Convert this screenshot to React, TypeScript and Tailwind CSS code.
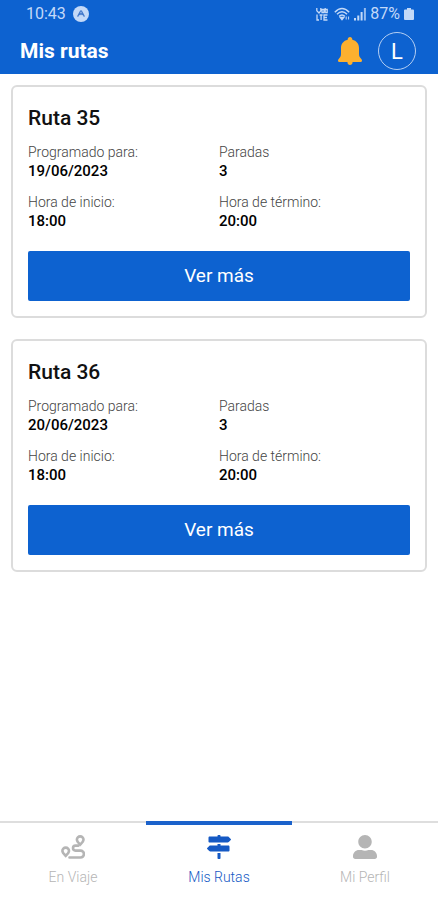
import { FaMapSigns, FaUserAlt } from 'react-icons/fa';

interface Route {
  id: number;
  name: string;
  date: string;
  stops: number;
  start: string;
  end: string;
}

const routes: Route[] = [
  { id: 35, name: 'Ruta 35', date: '19/06/2023', stops: 3, start: '18:00', end: '20:00' },
  { id: 36, name: 'Ruta 36', date: '20/06/2023', stops: 3, start: '18:00', end: '20:00' },
];

function BellIcon({ className }: { className?: string }) {
  return (
    <svg className={className} viewBox="0 0 24 28" fill="currentColor">
      <path d="M12 0c1.400 0 2.300 1 2.300 2.300v.4C18.500 3.600 21 6.800 21 11v6c0 2 .8 3.500 2.300 5 .5.500.7.900.7 1.500 0 .9-.5 1.500-1.300 1.500H1.300C.5 25 0 24.400 0 23.500c0-.6.2-1 .7-1.500C2.200 20.500 3 19 3 17v-6c0-4.200 2.500-7.400 6.700-8.300v-.4C9.700 1 10.600 0 12 0z" />
      <path d="M9.500 24.500h5v1c0 1.400-1 2.500-2.500 2.500s-2.500-1.100-2.500-2.500z" />
    </svg>
  );
}

function RouteIcon({ className }: { className?: string }) {
  return (
    <svg className={className} viewBox="0 0 24 24" fill="none" stroke="currentColor">
      <path
        d="M19.200 1.400a3.300 3.300 0 0 1 3.300 3.400c0 1.600-1.500 3-3.300 4.800-1.800-1.800-3.300-3.200-3.300-4.800a3.300 3.300 0 0 1 3.300-3.400z"
        strokeWidth="2.600"
      />
      <path
        d="M4.700 12.600A3.300 3.300 0 0 1 8 16c0 1.600-1.500 3-3.300 4.800C2.900 19 1.400 17.600 1.400 16a3.300 3.300 0 0 1 3.300-3.400z"
        strokeWidth="2.600"
      />
      <path
        d="M17.500 10.600H14.500a2.500 2.500 0 0 0 0 5h5a3.300 3.300 0 0 1 0 6.900H8.500"
        strokeWidth="2.600"
        strokeLinecap="round"
      />
    </svg>
  );
}

const tabs = [
  { id: 'trip', label: 'En Viaje', icon: RouteIcon },
  { id: 'routes', label: 'Mis Rutas', icon: FaMapSigns },
  { id: 'profile', label: 'Mi Perfil', icon: FaUserAlt },
];

function StatusBar() {
  return (
    <div className="flex h-7 items-center justify-between pl-[26px] pr-6 text-[#c3d9f8]">
      <div className="flex items-center gap-[7px]">
        <span className="text-base">10:43</span>
        <svg className="h-4 w-4" viewBox="0 0 16 16">
          <circle cx="8" cy="8" r="8" fill="currentColor" />
          <path d="M4.600 10.600 7.400 5.200q.6-.9 1.200 0l2.800 5.400M6.500 9 8 7.400 9.500 9" fill="none" stroke="#3f76c9" strokeWidth="1.200" />
        </svg>
      </div>
      <div className="flex items-center gap-1">
        <svg className="mr-0.5 h-3.5 w-3" viewBox="0 0 12 14" fill="none" stroke="currentColor" strokeWidth="1.300">
          <path d="M.8 1v2.800L3 6l1.800-2.200V1M6 2.500h2v3H6zM9.200 5.800V1M9.200 2.500h2v3h-2M1 7.500V13h2M3.600 8h3M5.100 8v5M11.500 8H8v5h3.500M8 10.500h3" />
        </svg>
        <svg className="h-3.5 w-4" viewBox="0 0 16 14" fill="none" stroke="currentColor" strokeWidth="1.500">
          <path d="M.8 5.200Q8-2.200 15.200 5.200M3 7.300q5-5 10 0M5.200 9.400q2.800-2.800 5.600 0" />
          <path d="m6.400 10.500 1.600 2 1.600-2z" fill="currentColor" />
          <path d="M12.200 9.500v3M14.600 9.500v3" strokeWidth="1" />
        </svg>
        <svg className="h-3.5 w-3" viewBox="0 0 12 14" fill="currentColor">
          <path d="M0 11h2v2.500H0zM3.300 8.500h2v5h-2zM6.600 5h2v8.500h-2z" />
          <path d="M9.900 1h2v12.500h-2z" opacity=".75" />
        </svg>
        <span className="text-base">87%</span>
        <svg className="h-3 w-2.5" viewBox="0 0 10 12" fill="currentColor">
          <path d="M3 0h4v1.500h2q1 0 1 1V11q0 1-1 1H1q-1 0-1-1V2.500q0-1 1-1h2z" />
        </svg>
      </div>
    </div>
  );
}

function Field({ label, value }: { label: string; value: string | number }) {
  return (
    <div>
      <dt className="text-sm leading-5 font-light text-[#444]">{label}</dt>
      <dd className="text-[15px] leading-[18px] font-medium text-black">{value}</dd>
    </div>
  );
}

function RouteCard({ route }: { route: Route }) {
  return (
    <article className="rounded-md border-2 border-[#dcdcdc] px-[15px] pt-[17px] pb-[15px]">
      <h2 className="text-[21px] leading-7 font-medium text-[#111]">{route.name}</h2>
      <dl className="mt-2.5 mb-[21px] grid grid-cols-2 gap-y-3">
        <Field label="Programado para:" value={route.date} />
        <Field label="Paradas" value={route.stops} />
        <Field label="Hora de inicio:" value={route.start} />
        <Field label="Hora de término:" value={route.end} />
      </dl>
      <button type="button" className="h-[50px] w-full rounded-xs bg-[#0d62d0] text-[19px] text-white">
        Ver más
      </button>
    </article>
  );
}

export default function App() {
  const activeTab = 'routes';

  return (
    <div className="flex min-h-screen flex-col bg-white font-['Roboto',sans-serif]">
      {/* Header */}
      <header className="bg-[#0d62d0] text-white">
        <StatusBar />
        <div className="flex h-[46px] items-center justify-between pr-[22px] pl-5">
          <h1 className="pt-0.5 text-[21px] font-bold">Mis rutas</h1>
          <div className="flex items-center gap-4">
            <button type="button" aria-label="Notificaciones" className="text-[#fdb02f]">
              <BellIcon className="h-7 w-6" />
            </button>
            <button
              type="button"
              aria-label="Cuenta"
              className="flex h-[38px] w-[38px] items-center justify-center rounded-full border border-[#b5cff3] text-[22px]"
            >
              L
            </button>
          </div>
        </div>
      </header>

      {/* Routes */}
      <main className="flex flex-1 flex-col gap-[21px] px-[11px] py-[11px]">
        {routes.map((route) => (
          <RouteCard key={route.id} route={route} />
        ))}
      </main>

      {/* Bottom tabs */}
      <nav className="grid h-[79px] grid-cols-3">
        {tabs.map(({ id, label, icon: Icon }) => (
          <button
            key={id}
            type="button"
            className={`flex flex-col items-center gap-2 text-sm font-light ${
              id === activeTab
                ? 'border-t-4 border-[#1b62cb] pt-2.5 text-[#1559c4]'
                : 'border-t-2 border-[#dedede] pt-3 text-[#b5b5b5]'
            }`}
          >
            <Icon className="h-6 w-6" />
            {label}
          </button>
        ))}
      </nav>
    </div>
  );
}
